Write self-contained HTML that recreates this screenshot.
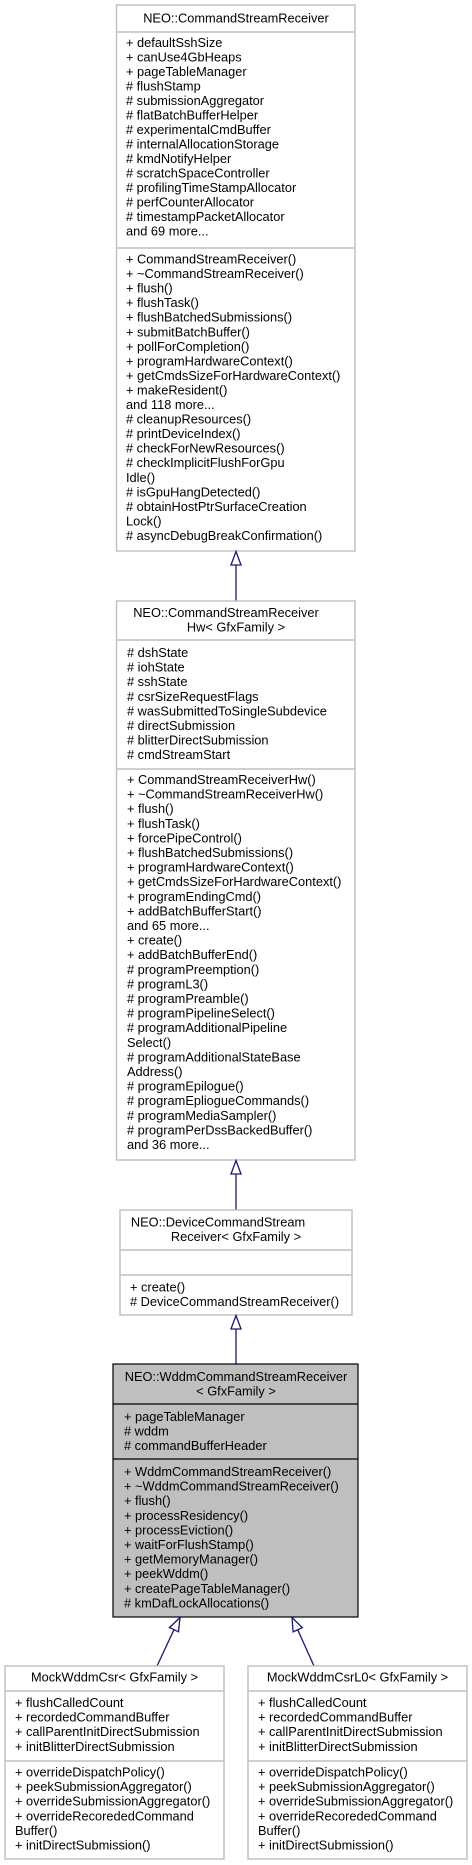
<!DOCTYPE html>
<html><head><meta charset="utf-8"><style>
html,body{margin:0;padding:0;background:#fff;width:472px;height:1865px;overflow:hidden}
svg{display:block}
text{font-family:"Liberation Sans",Arial,sans-serif;font-size:12.8px;fill:#000}
.c{text-anchor:middle}
.b{fill:#fff;stroke:#bfbfbf;stroke-width:1.4}
.h{fill:#bfbfbf;stroke:#000;stroke-width:1.2}
.d{stroke:#bfbfbf;stroke-width:1.4}
.dh{stroke:#000;stroke-width:1.2}
.a{stroke:#191970;stroke-width:1.3;fill:none}
.t{stroke:#191970;stroke-width:1.3;fill:#fff}
</style></head><body>
<svg width="472" height="1865" viewBox="0 0 472 1865">
<!-- Box 1 -->
<rect class="b" x="116.5" y="5" width="238.5" height="546"/>
<line class="d" x1="116.5" y1="32" x2="355" y2="32"/>
<line class="d" x1="116.5" y1="248" x2="355" y2="248"/>
<text class="c" x="236" y="22.5">NEO::CommandStreamReceiver</text>
<text x="126" y="47">
<tspan x="126" dy="0">+ defaultSshSize</tspan>
<tspan x="126" dy="14.5">+ canUse4GbHeaps</tspan>
<tspan x="126" dy="14.5">+ pageTableManager</tspan>
<tspan x="126" dy="14.5"># flushStamp</tspan>
<tspan x="126" dy="14.5"># submissionAggregator</tspan>
<tspan x="126" dy="14.5"># flatBatchBufferHelper</tspan>
<tspan x="126" dy="14.5"># experimentalCmdBuffer</tspan>
<tspan x="126" dy="14.5"># internalAllocationStorage</tspan>
<tspan x="126" dy="14.5"># kmdNotifyHelper</tspan>
<tspan x="126" dy="14.5"># scratchSpaceController</tspan>
<tspan x="126" dy="14.5"># profilingTimeStampAllocator</tspan>
<tspan x="126" dy="14.5"># perfCounterAllocator</tspan>
<tspan x="126" dy="14.5"># timestampPacketAllocator</tspan>
<tspan x="126" dy="14.5">and 69 more...</tspan>
</text>
<text x="126" y="263.5">
<tspan x="126" dy="0">+ CommandStreamReceiver()</tspan>
<tspan x="126" dy="14.55">+ ~CommandStreamReceiver()</tspan>
<tspan x="126" dy="14.55">+ flush()</tspan>
<tspan x="126" dy="14.55">+ flushTask()</tspan>
<tspan x="126" dy="14.55">+ flushBatchedSubmissions()</tspan>
<tspan x="126" dy="14.55">+ submitBatchBuffer()</tspan>
<tspan x="126" dy="14.55">+ pollForCompletion()</tspan>
<tspan x="126" dy="14.55">+ programHardwareContext()</tspan>
<tspan x="126" dy="14.55">+ getCmdsSizeForHardwareContext()</tspan>
<tspan x="126" dy="14.55">+ makeResident()</tspan>
<tspan x="126" dy="14.55">and 118 more...</tspan>
<tspan x="126" dy="14.55"># cleanupResources()</tspan>
<tspan x="126" dy="14.55"># printDeviceIndex()</tspan>
<tspan x="126" dy="14.55"># checkForNewResources()</tspan>
<tspan x="126" dy="14.55"># checkImplicitFlushForGpu</tspan>
<tspan x="126" dy="14.55">Idle()</tspan>
<tspan x="126" dy="14.55"># isGpuHangDetected()</tspan>
<tspan x="126" dy="14.55"># obtainHostPtrSurfaceCreation</tspan>
<tspan x="126" dy="14.55">Lock()</tspan>
<tspan x="126" dy="14.55"># asyncDebugBreakConfirmation()</tspan>
</text>
<!-- Arrow 1 -->
<line class="a" x1="236" y1="565" x2="236" y2="601"/>
<polygon class="t" points="236,551.5 231,565 241,565"/>
<!-- Box 2 -->
<rect class="b" x="116.5" y="601" width="238.5" height="559"/>
<line class="d" x1="116.5" y1="640" x2="355" y2="640"/>
<line class="d" x1="116.5" y1="769" x2="355" y2="769"/>
<text class="c" x="226" y="617">NEO::CommandStreamReceiver</text>
<text class="c" x="236" y="631.5">Hw&lt; GfxFamily &gt;</text>
<text x="127" y="657">
<tspan x="127" dy="0"># dshState</tspan>
<tspan x="127" dy="14.6"># iohState</tspan>
<tspan x="127" dy="14.6"># sshState</tspan>
<tspan x="127" dy="14.6"># csrSizeRequestFlags</tspan>
<tspan x="127" dy="14.6"># wasSubmittedToSingleSubdevice</tspan>
<tspan x="127" dy="14.6"># directSubmission</tspan>
<tspan x="127" dy="14.6"># blitterDirectSubmission</tspan>
<tspan x="127" dy="14.6"># cmdStreamStart</tspan>
</text>
<text x="127" y="784">
<tspan x="127" dy="0">+ CommandStreamReceiverHw()</tspan>
<tspan x="127" dy="14.6">+ ~CommandStreamReceiverHw()</tspan>
<tspan x="127" dy="14.6">+ flush()</tspan>
<tspan x="127" dy="14.6">+ flushTask()</tspan>
<tspan x="127" dy="14.6">+ forcePipeControl()</tspan>
<tspan x="127" dy="14.6">+ flushBatchedSubmissions()</tspan>
<tspan x="127" dy="14.6">+ programHardwareContext()</tspan>
<tspan x="127" dy="14.6">+ getCmdsSizeForHardwareContext()</tspan>
<tspan x="127" dy="14.6">+ programEndingCmd()</tspan>
<tspan x="127" dy="14.6">+ addBatchBufferStart()</tspan>
<tspan x="127" dy="14.6">and 65 more...</tspan>
<tspan x="127" dy="14.6">+ create()</tspan>
<tspan x="127" dy="14.6">+ addBatchBufferEnd()</tspan>
<tspan x="127" dy="14.6"># programPreemption()</tspan>
<tspan x="127" dy="14.6"># programL3()</tspan>
<tspan x="127" dy="14.6"># programPreamble()</tspan>
<tspan x="127" dy="14.6"># programPipelineSelect()</tspan>
<tspan x="127" dy="14.6"># programAdditionalPipeline</tspan>
<tspan x="127" dy="14.6">Select()</tspan>
<tspan x="127" dy="14.6"># programAdditionalStateBase</tspan>
<tspan x="127" dy="14.6">Address()</tspan>
<tspan x="127" dy="14.6"># programEpilogue()</tspan>
<tspan x="127" dy="14.6"># programEpliogueCommands()</tspan>
<tspan x="127" dy="14.6"># programMediaSampler()</tspan>
<tspan x="127" dy="14.6"># programPerDssBackedBuffer()</tspan>
<tspan x="127" dy="14.6">and 36 more...</tspan>
</text>
<!-- Arrow 2 -->
<line class="a" x1="236" y1="1174" x2="236" y2="1210"/>
<polygon class="t" points="236,1160.5 231,1174 241,1174"/>
<!-- Box 3 -->
<rect class="b" x="120" y="1210" width="232" height="105"/>
<line class="d" x1="120" y1="1250" x2="352" y2="1250"/>
<line class="d" x1="120" y1="1275" x2="352" y2="1275"/>
<text class="c" x="218" y="1226.5">NEO::DeviceCommandStream</text>
<text class="c" x="236" y="1241">Receiver&lt; GfxFamily &gt;</text>
<text x="130" y="1291.5">
<tspan x="130" dy="0">+ create()</tspan>
<tspan x="130" dy="14.6"># DeviceCommandStreamReceiver()</tspan>
</text>
<!-- Arrow 3 -->
<line class="a" x1="236" y1="1329" x2="236" y2="1364"/>
<polygon class="t" points="236,1315.5 231,1329 241,1329"/>
<!-- Box 4 -->
<rect class="h" x="113" y="1364" width="245" height="253"/>
<line class="dh" x1="113" y1="1404" x2="358" y2="1404"/>
<line class="dh" x1="113" y1="1459" x2="358" y2="1459"/>
<text class="c" x="236" y="1381">NEO::WddmCommandStreamReceiver</text>
<text class="c" x="236" y="1395.5">&lt; GfxFamily &gt;</text>
<text x="124" y="1421">
<tspan x="124" dy="0">+ pageTableManager</tspan>
<tspan x="124" dy="14.6"># wddm</tspan>
<tspan x="124" dy="14.6"># commandBufferHeader</tspan>
</text>
<text x="124" y="1476">
<tspan x="124" dy="0">+ WddmCommandStreamReceiver()</tspan>
<tspan x="124" dy="14.6">+ ~WddmCommandStreamReceiver()</tspan>
<tspan x="124" dy="14.6">+ flush()</tspan>
<tspan x="124" dy="14.6">+ processResidency()</tspan>
<tspan x="124" dy="14.6">+ processEviction()</tspan>
<tspan x="124" dy="14.6">+ waitForFlushStamp()</tspan>
<tspan x="124" dy="14.6">+ getMemoryManager()</tspan>
<tspan x="124" dy="14.6">+ peekWddm()</tspan>
<tspan x="124" dy="14.6">+ createPageTableManager()</tspan>
<tspan x="124" dy="14.6"># kmDafLockAllocations()</tspan>
</text>
<!-- Diagonal arrows -->
<line class="a" x1="157" y1="1666" x2="174" y2="1629.7"/>
<polygon class="t" points="180,1617.5 178.5,1631.8 169.5,1627.6"/>
<line class="a" x1="314" y1="1666" x2="297.7" y2="1629.8"/>
<polygon class="t" points="292,1617.5 302.3,1627.7 293.1,1631.9"/>
<!-- Box 5 -->
<rect class="b" x="5" y="1666" width="219" height="193"/>
<line class="d" x1="5" y1="1691" x2="224" y2="1691"/>
<line class="d" x1="5" y1="1761" x2="224" y2="1761"/>
<text class="c" x="114.5" y="1681.5">MockWddmCsr&lt; GfxFamily &gt;</text>
<text x="15" y="1707">
<tspan x="15" dy="0">+ flushCalledCount</tspan>
<tspan x="15" dy="14.6">+ recordedCommandBuffer</tspan>
<tspan x="15" dy="14.6">+ callParentInitDirectSubmission</tspan>
<tspan x="15" dy="14.6">+ initBlitterDirectSubmission</tspan>
</text>
<text x="15" y="1776.5">
<tspan x="15" dy="0">+ overrideDispatchPolicy()</tspan>
<tspan x="15" dy="14.6">+ peekSubmissionAggregator()</tspan>
<tspan x="15" dy="14.6">+ overrideSubmissionAggregator()</tspan>
<tspan x="15" dy="14.6">+ overrideRecorededCommand</tspan>
<tspan x="15" dy="14.6">Buffer()</tspan>
<tspan x="15" dy="14.6">+ initDirectSubmission()</tspan>
</text>
<!-- Box 6 -->
<rect class="b" x="248" y="1666" width="219" height="193"/>
<line class="d" x1="248" y1="1691" x2="467" y2="1691"/>
<line class="d" x1="248" y1="1761" x2="467" y2="1761"/>
<text class="c" x="357.5" y="1681.5">MockWddmCsrL0&lt; GfxFamily &gt;</text>
<text x="258" y="1707">
<tspan x="258" dy="0">+ flushCalledCount</tspan>
<tspan x="258" dy="14.6">+ recordedCommandBuffer</tspan>
<tspan x="258" dy="14.6">+ callParentInitDirectSubmission</tspan>
<tspan x="258" dy="14.6">+ initBlitterDirectSubmission</tspan>
</text>
<text x="258" y="1776.5">
<tspan x="258" dy="0">+ overrideDispatchPolicy()</tspan>
<tspan x="258" dy="14.6">+ peekSubmissionAggregator()</tspan>
<tspan x="258" dy="14.6">+ overrideSubmissionAggregator()</tspan>
<tspan x="258" dy="14.6">+ overrideRecorededCommand</tspan>
<tspan x="258" dy="14.6">Buffer()</tspan>
<tspan x="258" dy="14.6">+ initDirectSubmission()</tspan>
</text>
</svg>
</body></html>
